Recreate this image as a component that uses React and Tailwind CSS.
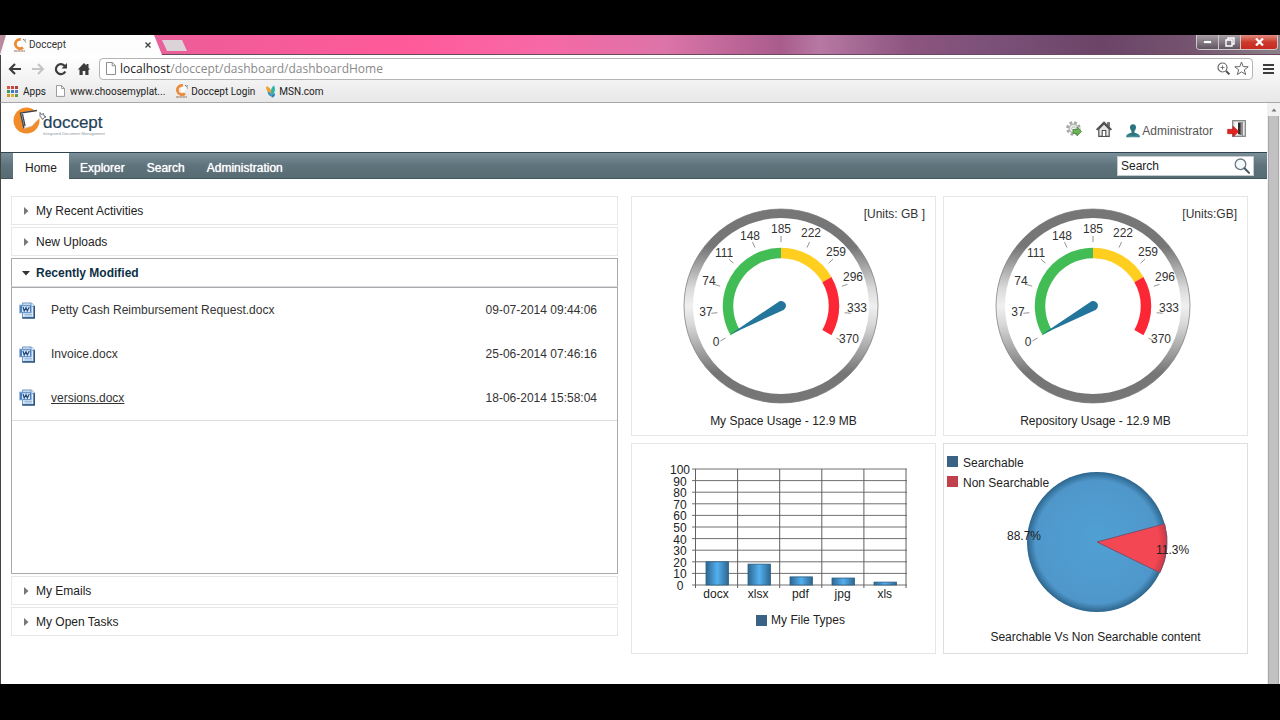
import React, { useState } from 'react';

const sections = ['My Recent Activities', 'New Uploads', 'Recently Modified', 'My Emails', 'My Open Tasks'];

const files = [
  { name: 'Petty Cash Reimbursement Request.docx', date: '09-07-2014 09:44:06' },
  { name: 'Invoice.docx', date: '25-06-2014 07:46:16' },
  { name: 'versions.docx', date: '18-06-2014 15:58:04', active: true },
];

const gaugeLabels = [
  { value: 0, x: 84, y: 149 },
  { value: 37, x: 74, y: 119 },
  { value: 74, x: 77, y: 88 },
  { value: 111, x: 92, y: 60 },
  { value: 148, x: 118, y: 43 },
  { value: 185, x: 149, y: 36 },
  { value: 222, x: 179, y: 40 },
  { value: 259, x: 204, y: 59 },
  { value: 296, x: 221, y: 84 },
  { value: 333, x: 225, y: 115 },
  { value: 370, x: 217, y: 146 },
];

const fileTypes = [
  { name: 'docx', value: 20 },
  { name: 'xlsx', value: 18 },
  { name: 'pdf', value: 7 },
  { name: 'jpg', value: 6 },
  { name: 'xls', value: 2.5 },
];

const polar = (cx, cy, r, deg) => {
  const rad = (deg * Math.PI) / 180;
  return [cx + r * Math.cos(rad), cy - r * Math.sin(rad)];
};

const arcPath = (cx, cy, r, from, to) => {
  const [x1, y1] = polar(cx, cy, r, from);
  const [x2, y2] = polar(cx, cy, r, to);
  return `M${x1} ${y1} A${r} ${r} 0 0 1 ${x2} ${y2}`;
};

/* Icons */

const DocceptMark = () => (
  <svg viewBox="0 0 14 14" className="h-[14px] w-[14px]" aria-hidden="true">
    <path d="M10 9.500A4.600 4.600 0 1 1 7.800 1.500" fill="none" stroke="#ee8a35" strokeWidth="2.800" />
    <path d="M5.500 4.200l5.500-2.700.8 1.500-2.300 4.500-2.300 1z" fill="#fff" />
    <path d="M10 1.400l1.400.8 1.400-.4M11.800 3.400l1 .8" fill="none" stroke="#53606b" strokeWidth="1" />
    <path d="M1 13h11" stroke="#9b7353" strokeWidth="1.200" strokeDasharray="3 .3" />
  </svg>
);

const PageIcon = ({ className }) => (
  <svg viewBox="0 0 10 13" className={className} aria-hidden="true">
    <path d="M.5.5h5.8L9.5 3.7v8.8h-9z" fill="#fff" stroke="#8d8d8d" />
    <path d="M6.2.5v3.3h3.3" fill="none" stroke="#8d8d8d" />
  </svg>
);

const AppsIcon = () => (
  <svg viewBox="0 0 11 11" className="h-[11px] w-[11px]" aria-hidden="true">
    <rect x="0" y="0" width="3" height="3" fill="#d9534a" />
    <rect x="4" y="0" width="3" height="3" fill="#c8453d" />
    <rect x="8" y="0" width="3" height="3" fill="#a8433b" />
    <rect x="0" y="4" width="3" height="3" fill="#3b9b5b" />
    <rect x="4" y="4" width="3" height="3" fill="#3b78c4" />
    <rect x="8" y="4" width="3" height="3" fill="#5878b8" />
    <rect x="0" y="8" width="3" height="3" fill="#c89b2c" />
    <rect x="4" y="8" width="3" height="3" fill="#e0b03a" />
    <rect x="8" y="8" width="3" height="3" fill="#5b9b4b" />
  </svg>
);

const MsnIcon = () => (
  <svg viewBox="0 0 12 13" className="h-[13px] w-3" aria-hidden="true">
    <path d="M1 1.500c3 0 5.500 2.500 6 8-3.500-1-6-4-6-8z" fill="#f0a030" />
    <path d="M9 .5c1.800 3 1 7.500-2 10C5 7 6 2.500 9 .5z" fill="#2bb5a8" />
    <path d="M2.500 6.500c2.500.5 4.200 2.500 4.800 5-2.500 0-4.600-2-4.800-5z" fill="#2f8fd0" />
    <path d="M6.500 12.300c.2-2 1.200-3.500 3.500-4 0 3-1.200 4.600-3.500 4z" fill="#2b7fb5" />
  </svg>
);

const Logo = () => (
  <svg viewBox="0 0 92 30" className="h-[30px] w-[92px]" role="img" aria-label="doccept">
    <circle cx="13.500" cy="13.500" r="13" fill="#f28c28" />
    <path d="M8 5.500L24.500 3.500l4 2.500-2 5L19 19l-8.500 2.500z" fill="#fff" />
    <path d="M24 3.500L7.500 6l3.500 15.500M9.500 7.200l2.600 12" fill="none" stroke="#3c4650" strokeWidth="1.300" />
    <path d="M11 21.500l8-2.500 4-5" fill="none" stroke="#c9ccd0" strokeWidth="0.800" />
    <path d="M27 5.500l1.500 2 2-1 .5 2.500 2 .8-2.200 1.200-1.200 1.500-1.200-2-1.400-1z" fill="#fff" stroke="#53606b" strokeWidth="0.900" />
    <text x="30" y="21" fontSize="17" fill="#1f4257" stroke="#1f4257" strokeWidth="0.200">doccept</text>
    <text x="30" y="28" fontSize="4" fill="#8b97a0">Integrated Document Management</text>
  </svg>
);

const GearIcon = () => (
  <svg viewBox="0 0 16 16" className="h-4 w-4" aria-hidden="true">
    <circle cx="7.500" cy="7.500" r="5.800" fill="none" stroke="#a3a8a3" strokeWidth="3" strokeDasharray="2.600 1.955" />
    <circle cx="7.500" cy="7.500" r="4.300" fill="#f0f2f0" stroke="#b4b8b4" strokeWidth="1.500" />
    <circle cx="7.500" cy="7.500" r="1.700" fill="#fff" stroke="#9aa09a" strokeWidth="0.800" />
    <path d="M7 8.500h4V6l4.500 4.500L11 15v-2.500H7z" fill="#6db353" stroke="#3f7d35" strokeWidth="0.700" />
  </svg>
);

const HouseIcon = () => (
  <svg viewBox="0 0 16 16" className="h-4 w-4" aria-hidden="true">
    <path d="M11.500 1.500h2v4h-2z" fill="#777" stroke="#555" strokeWidth="0.700" />
    <path d="M2.800 8v7.300h10.400V8L8 2.800z" fill="#e6e6e6" stroke="#4f4f4f" strokeWidth="1.200" />
    <path d="M.6 8.800L8 1.400l7.400 7.400" fill="none" stroke="#4f4f4f" strokeWidth="1.800" />
    <path d="M6.200 15V9.500h3.600V15" fill="#fff" stroke="#4f4f4f" strokeWidth="1.100" />
  </svg>
);

const UserIcon = () => (
  <svg viewBox="0 0 14 14" className="h-[14px] w-[14px]" aria-hidden="true">
    <path d="M7 .3c2.200 0 3.200 1.600 3 3.500-.2 1.500-.9 2.600-1.500 3.200v1.800c2.500.6 5 1.400 5.200 3.200v1.200H.3V12c.2-1.800 2.700-2.600 5.200-3.200V7C4.900 6.400 4.200 5.300 4 3.800 3.800 1.900 4.800.3 7 .3z" fill="#2c7480" />
    <path d="M.5 11.500c4 1.200 9 1.200 13 0" fill="none" stroke="#5aa3ad" strokeWidth="0.800" />
  </svg>
);

const ExitIcon = () => (
  <svg viewBox="0 0 20 18" className="h-[18px] w-5" aria-hidden="true">
    <rect x="5.700" y=".7" width="12.600" height="15.600" fill="#e9e9e9" stroke="#7d7d7d" strokeWidth="1.200" />
    <path d="M8.500 2.500h4v12h-4z" fill="#fff" />
    <path d="M11 2.500h5v13l-5-1.500z" fill="#2d2d2d" />
    <path d="M13.500 3l2.500-.5v13l-2.500-1z" fill="#8f8f8f" />
    <path d="M.6 9.300H6V6.200l6 5.300-6 5.300v-3.100H.6z" fill="#e2231f" stroke="#b01512" strokeWidth="0.600" />
  </svg>
);

const SearchIcon = () => (
  <svg viewBox="0 0 16 16" className="h-4 w-4" aria-hidden="true">
    <circle cx="6.500" cy="6.300" r="5.300" fill="#f4f9fc" stroke="#6b7880" strokeWidth="1.300" />
    <path d="M10.500 10.300l4.500 4.600" stroke="#4a5860" strokeWidth="2" strokeLinecap="round" />
  </svg>
);

const WordIcon = () => (
  <svg viewBox="0 0 16 17" className="h-[17px] w-4" aria-hidden="true">
    <path d="M3.500 1h9l3 3v11.500h-12z" fill="#dbe9f8" stroke="#6f93bf" />
    <path d="M15.200 4v12h-12" fill="none" stroke="#2d547f" strokeWidth="1.600" />
    <path d="M12 1v3.300h3.400" fill="#fff" stroke="#4d76a6" strokeWidth="0.800" />
    <path d="M5.500 12.500h7.500M5.500 14h7.500" stroke="#8fb0d6" strokeWidth="0.800" />
    <rect x=".5" y="3" width="12" height="8" fill="#4a80be" stroke="#9dbde2" strokeWidth="0.800" />
    <rect x="3" y="4.200" width="8" height="5.800" fill="#dce9f7" />
    <path d="M4 5l1.200 4L7 5.600 8.300 9l2-4" fill="none" stroke="#234d80" strokeWidth="1.200" />
  </svg>
);

const Triangle = ({ open }) => (
  <svg viewBox="0 0 8 8" className="h-2 w-2" aria-hidden="true">
    {open ? <path d="M0 2h8L4 6.500z" fill="#333" /> : <path d="M2 0l4.500 4L2 8z" fill="#777" />}
  </svg>
);

/* Browser window */

const TitleBar = () => (
  <div className="flex h-5 items-start justify-between border-b border-[#6b4a60] bg-[linear-gradient(90deg,#b98a9d_0%,#e0659c_10%,#ef5c98_15%,#ff5a9a_32%,#f868a6_42%,#dc74a8_52%,#a85c8c_61%,#b878a4_64%,#8c5580_71%,#7a5078_78%,#6b4468_86%,#75546f_93%,#8a8088_100%)]">
    <div className="flex items-start">
      <div className="flex h-5 w-[162px] items-center bg-[#fdfdfd] pr-2 pl-[13px] [clip-path:polygon(6px_0,154px_0,162px_100%,0_100%)]">
        <DocceptMark />
        <span className="ml-[2px] flex-1 text-[10px] leading-5 text-[#333]">Doccept</span>
        <button aria-label="Close tab" className="p-[3px]">
          <svg viewBox="0 0 6 6" className="h-[6px] w-[6px]">
            <path d="M.5.5l5 5M5.500.5l-5 5" stroke="#444" strokeWidth="1.400" />
          </svg>
        </button>
      </div>
      <button aria-label="New tab" className="mt-[5px] h-[11px] w-[26px] bg-[#dcd3d8] [clip-path:polygon(0_0,20px_0,25px_100%,5px_100%)]" />
    </div>
    <div className="mr-[2px] flex h-[15px] overflow-hidden rounded-b border border-t-0 border-[#cfc8cc]">
      <button aria-label="Minimize" className="flex w-[22px] items-center justify-center border-r border-[#cfc8cc] bg-linear-to-b from-[#a9a0a8] to-[#5f5660]">
        <svg viewBox="0 0 9 4" className="h-1 w-[9px]">
          <rect x=".5" y=".5" width="8" height="3" fill="#fff" stroke="#555" strokeWidth="0.500" />
        </svg>
      </button>
      <button aria-label="Restore" className="flex w-[22px] items-center justify-center border-r border-[#cfc8cc] bg-linear-to-b from-[#a9a0a8] to-[#5f5660]">
        <svg viewBox="0 0 10 10" className="h-[10px] w-[10px]">
          <path d="M3 3V1h6v6H7M1 3h6v6H1z" fill="none" stroke="#fff" strokeWidth="1.400" />
        </svg>
      </button>
      <button aria-label="Close" className="flex w-9 items-center justify-center bg-linear-to-b from-[#e08a80] via-[#cc3a2c] to-[#c8281c]">
        <svg viewBox="0 0 9 8" className="h-2 w-[9px]">
          <path d="M1 .5l7 7M8 .5l-7 7" stroke="#fff" strokeWidth="2.200" />
        </svg>
      </button>
    </div>
  </div>
);

const Toolbar = () => (
  <div className="flex h-[27px] items-center gap-2 pr-[6px] pl-[7px]">
    <div className="flex items-center gap-[9px]">
      <button aria-label="Back">
        <svg viewBox="0 0 14 12" className="h-3 w-[14px]">
          <path d="M13 6H3M7 1L2 6l5 5" fill="none" stroke="#3c3c3c" strokeWidth="2.200" />
        </svg>
      </button>
      <button aria-label="Forward">
        <svg viewBox="0 0 14 12" className="h-3 w-[14px]">
          <path d="M1 6h10M7 1l5 5-5 5" fill="none" stroke="#c4c4c4" strokeWidth="2" />
        </svg>
      </button>
      <button aria-label="Reload">
        <svg viewBox="0 0 14 14" className="h-[14px] w-[14px]">
          <path d="M11.300 9.500A5 5 0 1 1 10.800 4" fill="none" stroke="#3c3c3c" strokeWidth="2.200" />
          <path d="M13 1v5.500H7.500z" fill="#3c3c3c" />
        </svg>
      </button>
      <button aria-label="Home page">
        <svg viewBox="0 0 14 14" className="h-[14px] w-[14px]">
          <path d="M7 1L.8 7.500H2.500V13h3.200V9h2.600v4h3.200V7.500h1.700L11.500 5.700V2h-2v1.600z" fill="#3c3c3c" />
        </svg>
      </button>
    </div>
    <div className="flex h-[22px] flex-1 items-center rounded-sm border border-[#b5b5b5] bg-white pr-[3px] pl-[6px]">
      <PageIcon className="h-[13px] w-[10px]" />
      <a href="#" className="ml-1 flex-1 font-['Open_Sans',sans-serif] text-xs leading-5 text-[#8a8a8a]">
        <span className="text-[#222]">localhost</span>/doccept/dashboard/dashboardHome
      </a>
      <button aria-label="Zoom" className="mr-1">
        <svg viewBox="0 0 13 13" className="h-[13px] w-[13px]">
          <circle cx="5.500" cy="5.500" r="4.500" fill="none" stroke="#666" strokeWidth="1.200" />
          <path d="M3.500 5.500h4M5.500 3.500v4" stroke="#777" />
          <path d="M9 9l3.400 3.400" stroke="#555" strokeWidth="2" />
        </svg>
      </button>
      <button aria-label="Bookmark this page">
        <svg viewBox="0 0 15 15" className="h-[15px] w-[15px]">
          <path d="M7.500 1l1.700 4.600 5 .2-3.900 3 1.400 4.800-4.200-2.800-4.200 2.800 1.400-4.800-3.900-3 5-.2z" fill="#fff" stroke="#666" />
        </svg>
      </button>
    </div>
    <button aria-label="Menu" className="ml-[2px]">
      <svg viewBox="0 0 11 10" className="h-[10px] w-[11px]">
        <path d="M0 1h11M0 5h11M0 9h11" stroke="#3c3c3c" strokeWidth="2" />
      </svg>
    </button>
  </div>
);

const Bookmarks = () => (
  <div className="flex h-5 items-center gap-[10px] pb-[2px] pl-[6px] text-[10px] text-[#222]">
    <a href="#" className="flex items-center gap-[5px]">
      <AppsIcon />
      Apps
    </a>
    <a href="#" className="flex items-center gap-[5px]">
      <PageIcon className="h-3 w-[9px]" />
      www.choosemyplat...
    </a>
    <a href="#" className="flex items-center gap-[2px]">
      <DocceptMark />
      Doccept Login
    </a>
    <a href="#" className="flex items-center gap-[2px]">
      <MsnIcon />
      MSN.com
    </a>
  </div>
);

/* Dashboard widgets */

const Gauge = ({ id, units, caption }) => (
  <figure className="border border-[#e6e6e6]">
    <svg viewBox="0 0 303 213" className="block w-full" fill="#333" fontSize="12" textAnchor="middle">
      <defs>
        <linearGradient id={id} x1="0" y1="0" x2="0" y2="1">
          <stop offset="0.180" stopColor="#767676" />
          <stop offset="0.400" stopColor="#d8d8d8" />
          <stop offset="0.500" stopColor="#f0f0f0" />
          <stop offset="0.600" stopColor="#d8d8d8" />
          <stop offset="0.860" stopColor="#767676" />
        </linearGradient>
      </defs>
      <circle cx="149" cy="109" r="92.500" fill="#fff" stroke={`url(#${id})`} strokeWidth="9" />
      <circle cx="149" cy="109" r="97" fill="none" stroke="#777" strokeWidth="0.700" />
      <g fill="none" strokeWidth="10.500">
        <path d={arcPath(149, 109, 53, 210, 90)} stroke="#42bd56" />
        <path d={arcPath(149, 109, 53, 90, 30)} stroke="#ffce1f" />
        <path d={arcPath(149, 109, 53, 30, -30)} stroke="#fc2634" />
      </g>
      {gaugeLabels.map((label, i) => {
        const [x1, y1] = polar(149, 109, 64, 210 - i * 24);
        const [x2, y2] = polar(149, 109, 70, 210 - i * 24);
        return (
          <g key={label.value}>
            <line x1={x1} y1={y1} x2={x2} y2={y2} stroke="#777" strokeWidth="0.800" />
            <text x={label.x} y={label.y}>{label.value}</text>
          </g>
        );
      })}
      <path d="M98 137.500L146 105.200A4.800 4.800 0 1 1 151.500 113z" fill="#23759c" />
      <text x="293" y="21" textAnchor="end">{units}</text>
    </svg>
    <figcaption className="pb-[3px] text-center leading-[22px] text-[#222]">{caption}</figcaption>
  </figure>
);

const FileTypesChart = () => (
  <figure className="border border-[#e6e6e6]">
    <svg viewBox="0 0 303 165" className="block w-full" fill="#222" fontSize="12" textAnchor="middle">
      <defs>
        <linearGradient id="bar">
          <stop offset="0" stopColor="#2c6690" />
          <stop offset="0.500" stopColor="#54b0f0" />
          <stop offset="1" stopColor="#2c6690" />
        </linearGradient>
      </defs>
      {[0, 10, 20, 30, 40, 50, 60, 70, 80, 90, 100].map((tick) => {
        const y = 141 - tick * 1.16;
        return (
          <g key={tick}>
            <line x1="60" y1={y} x2="275" y2={y} stroke="#707070" />
            <text x="48" y={y + 5}>{tick}</text>
          </g>
        );
      })}
      {[0, 1, 2, 3, 4, 5].map((i) => (
        <line key={i} x1={63.5 + i * 42.1} y1="25" x2={63.5 + i * 42.1} y2="144" stroke="#606060" />
      ))}
      {fileTypes.map((type, i) => (
        <g key={type.name}>
          <rect x={74 + i * 42} y={141 - type.value * 1.16} width="22.500" height={type.value * 1.16} fill="url(#bar)" stroke="#2d5f83" strokeWidth="0.800" />
          <text x={84 + i * 42.2} y="154">{type.name}</text>
        </g>
      ))}
    </svg>
    <figcaption className="flex items-center justify-center gap-1 pl-[34px] leading-[22px] text-[#222]">
      <span className="h-[11px] w-[11px] bg-[#3a6285]" />
      My File Types
    </figcaption>
  </figure>
);

const PieChart = () => {
  const [x1, y1] = polar(153, 98, 70, 15);
  const [x2, y2] = polar(153, 98, 70, -26);
  return (
    <figure className="border border-[#dedede]">
      <svg viewBox="0 0 303 182" className="block w-full" fill="#222" fontSize="12">
        <defs>
          <radialGradient id="pieBlue">
            <stop offset="0" stopColor="#50a0d4" />
            <stop offset="0.880" stopColor="#4f97ca" />
            <stop offset="1" stopColor="#2c658c" />
          </radialGradient>
          <radialGradient id="pieRed" gradientUnits="userSpaceOnUse" cx="153" cy="98" r="70">
            <stop offset="0.880" stopColor="#f34753" />
            <stop offset="1" stopColor="#c93a48" />
          </radialGradient>
        </defs>
        <circle cx="153" cy="98" r="70" fill="url(#pieBlue)" />
        <path d={`M153 98L${x1} ${y1}A70 70 0 0 1 ${x2} ${y2}z`} fill="url(#pieRed)" stroke="#7c4e6c" strokeWidth="1" />
        <text x="63" y="96">88.7%</text>
        <text x="212" y="110">11.3%</text>
        <rect x="3" y="12" width="11" height="11" fill="#3a6285" />
        <text x="19" y="23">Searchable</text>
        <rect x="3" y="32" width="11" height="11" fill="#c0404c" />
        <text x="19" y="43">Non Searchable</text>
      </svg>
      <figcaption className="pb-[5px] text-center leading-[22px] text-[#222]">Searchable Vs Non Searchable content</figcaption>
    </figure>
  );
};

const FileTable = () => (
  <div className="min-h-[287px] border border-[#a9a9b0]">
    <table className="w-full border-b border-[#dddddd]">
      <tbody>
        {files.map((file) => (
          <tr key={file.name} className="h-11">
            <td className="w-[39px] pl-[7px]">
              <WordIcon />
            </td>
            <td>
              <a href="#" className={file.active ? 'text-[#333] underline' : 'text-[#333]'}>
                {file.name}
              </a>
            </td>
            <td className="pr-5 text-right text-[#333]">{file.date}</td>
          </tr>
        ))}
      </tbody>
    </table>
  </div>
);

const Accordion = () => {
  const [openSection, setOpenSection] = useState('Recently Modified');

  return (
    <div className="flex flex-col gap-[2px]">
      {sections.map((title) => {
        const open = title === openSection;
        return (
          <section key={title}>
            <button
              aria-expanded={open}
              onClick={() => setOpenSection(title)}
              className={
                open
                  ? 'flex h-[29px] w-full items-center gap-[6px] border border-[#a9a9b0] border-b-[#dcdcdc] pl-[10px] font-bold text-[#0d2f45]'
                  : 'flex h-[29px] w-full items-center gap-[6px] border border-[#e8e8e8] pl-[10px] text-[#222]'
              }
            >
              <Triangle open={open} />
              {title}
            </button>
            {title === 'Recently Modified' && open && <FileTable />}
          </section>
        );
      })}
    </div>
  );
};

const App = () => {
  return (
    <div className="flex min-h-screen flex-col bg-black pt-[35px] pb-9 font-[Roboto,sans-serif]">
      <TitleBar />
      <div className="border-b border-l border-b-[#a8a8a8] border-l-[#444] bg-linear-to-b from-white to-[#e8e8e8]">
        <Toolbar />
        <Bookmarks />
      </div>

      <div className="flex flex-1 border-l border-[#444] bg-white font-['Liberation_Sans',Arial,sans-serif] text-xs">
        <div className="flex-1">
          {/* Header */}
          <header className="flex h-[49px] items-start justify-between pt-1 pr-5 pl-3">
            <Logo />
            <div className="flex h-11 items-center">
              <button aria-label="Settings" className="mr-[14px]">
                <GearIcon />
              </button>
              <a href="#" aria-label="Home" className="mr-[14px]">
                <HouseIcon />
              </a>
              <a href="#" className="mr-[14px] flex items-center gap-[2px] pt-1 text-[#555]">
                <UserIcon />
                Administrator
              </a>
              <button aria-label="Log out">
                <ExitIcon />
              </button>
            </div>
          </header>

          {/* Navigation */}
          <nav className="flex h-[27px] items-center border-t border-b border-t-[#2f444e] border-b-[#44565e] bg-linear-to-b from-[#7b8f98] via-[#5f737c] to-[#576b73] pr-[13px] pl-3 leading-[30px] text-white">
            <a href="#" className="h-[26px] self-start bg-white px-3 text-[#222]">Home</a>
            <a href="#" className="self-stretch px-[11px] [text-shadow:0_0_1px_#fff]">Explorer</a>
            <a href="#" className="self-stretch px-[11px] [text-shadow:0_0_1px_#fff]">Search</a>
            <a href="#" className="self-stretch px-[11px] [text-shadow:0_0_1px_#fff]">Administration</a>
            <form className="ml-auto flex h-5 w-[137px] items-center border border-[#c5ccd0] bg-white px-[3px] leading-4">
              <input type="text" aria-label="Search" defaultValue="Search" className="min-w-0 flex-1 text-[#222] outline-none" />
              <button type="button" aria-label="Run search">
                <SearchIcon />
              </button>
            </form>
          </nav>

          {/* Dashboard */}
          <main className="grid grid-cols-[607fr_617fr] items-start gap-[13px] pt-[17px] pr-[19px] pb-[29px] pl-[10px]">
            <Accordion />
            <div className="grid grid-cols-2 gap-[7px]">
              <Gauge id="spaceRim" units="[Units: GB ]" caption="My Space Usage - 12.9 MB" />
              <Gauge id="repoRim" units="[Units:GB]" caption="Repository Usage - 12.9 MB" />
              <FileTypesChart />
              <PieChart />
            </div>
          </main>
        </div>

        {/* Scrollbar */}
        <div className="flex w-[13px] flex-col items-center bg-[#f1f1f1]" aria-hidden="true">
          <svg viewBox="0 0 8 13" className="h-[13px] w-2">
            <path d="M1.500 8.500L4 5.500l2.500 3z" fill="#777" />
          </svg>
          <div className="w-[11px] flex-1 border-x border-[#a8a8a8] bg-[#c1c1c1]" />
        </div>
      </div>
    </div>
  );
};

export default App;
